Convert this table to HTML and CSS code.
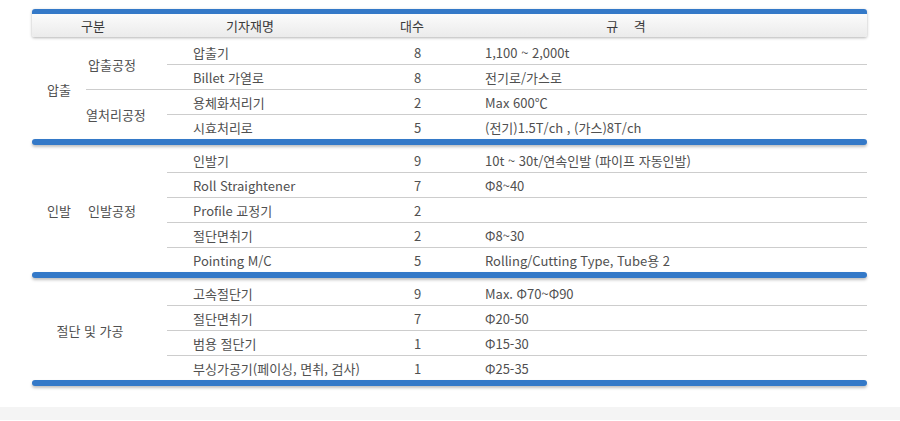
FILE: index.html
```html
<!DOCTYPE html>
<html lang="ko">
<head>
<meta charset="utf-8">
<link rel="stylesheet" href="styles.css">
</head>
<body>
<div class="wrap">
  <div class="head">
    <span class="h1">구분</span>
    <span class="h2">기자재명</span>
    <span class="h3">대수</span>
    <span class="h4">규 격</span>
  </div>

  <table class="grp">
    <colgroup><col class="c1"><col class="c2"><col class="c3"><col class="c4"><col class="c5"></colgroup>
    <tr>
      <td class="g" rowspan="4">압출</td>
      <td class="s" rowspan="2">압출공정</td>
      <td class="it">압출기</td><td class="n">8</td><td class="sp">1,100 ~ 2,000t</td>
    </tr>
    <tr class="ln"><td class="it">Billet 가열로</td><td class="n">8</td><td class="sp">전기로/가스로</td></tr>
    <tr class="ln">
      <td class="s lnc" rowspan="2">열처리공정</td>
      <td class="it">용체화처리기</td><td class="n">2</td><td class="sp">Max 600℃</td>
    </tr>
    <tr class="ln"><td class="it">시효처리로</td><td class="n">5</td><td class="sp">(전기)1.5T/ch , (가스)8T/ch</td></tr>
  </table>
  <div class="bar"></div>

  <table class="grp">
    <colgroup><col class="c1"><col class="c2"><col class="c3"><col class="c4"><col class="c5"></colgroup>
    <tr>
      <td class="g" rowspan="5">인발</td>
      <td class="s" rowspan="5">인발공정</td>
      <td class="it">인발기</td><td class="n">9</td><td class="sp">10t ~ 30t/연속인발 (파이프 자동인발)</td>
    </tr>
    <tr class="ln"><td class="it">Roll Straightener</td><td class="n">7</td><td class="sp">Φ8~40</td></tr>
    <tr class="ln"><td class="it">Profile 교정기</td><td class="n">2</td><td class="sp"></td></tr>
    <tr class="ln"><td class="it">절단면취기</td><td class="n">2</td><td class="sp">Φ8~30</td></tr>
    <tr class="ln"><td class="it">Pointing M/C</td><td class="n">5</td><td class="sp">Rolling/Cutting Type, Tube용 2</td></tr>
  </table>
  <div class="bar"></div>

  <table class="grp">
    <colgroup><col class="c1"><col class="c2"><col class="c3"><col class="c4"><col class="c5"></colgroup>
    <tr>
      <td class="g wide" rowspan="4" colspan="2">절단 및 가공</td>
      <td class="it">고속절단기</td><td class="n">9</td><td class="sp">Max. Φ70~Φ90</td>
    </tr>
    <tr class="ln"><td class="it">절단면취기</td><td class="n">7</td><td class="sp">Φ20-50</td></tr>
    <tr class="ln"><td class="it">범용 절단기</td><td class="n">1</td><td class="sp">Φ15-30</td></tr>
    <tr class="ln"><td class="it">부싱가공기(페이싱, 면취, 검사)</td><td class="n">1</td><td class="sp">Φ25-35</td></tr>
  </table>
  <div class="bar"></div>
</div>
<div class="foot"></div>
</body>
</html>
```

FILE: styles.css
```css
html, body {
  margin: 0;
  padding: 0;
  background: #ffffff;
}

body {
  font-family: "Noto Sans CJK KR", "Noto Sans", sans-serif;
  font-size: 13px;
  color: #505050;
}

.wrap {
  width: 835px;
  padding: 9px 33px 0 32px;
}

.head {
  display: flex;
  align-items: center;
  height: 23px;
  border-top: 5px solid #3479c8;
  border-radius: 3px 3px 2px 2px;
  background: linear-gradient(#fbfbfb, #ebebeb);
  box-shadow: 0 1px 3px rgba(0, 0, 0, 0.3);
  color: #3a3a3a;
}

.head span {
  display: block;
  text-align: center;
}

.h1 { width: 122px; }
.h2 { width: 192px; }
.h3 { width: 132px; }
.h4 { width: 296px; word-spacing: 12px; }

.grp {
  width: 835px;
  margin-top: 2px;
  border-collapse: separate;
  border-spacing: 0;
  table-layout: fixed;
}

.c1 { width: 54px; }
.c2 { width: 81px; }
.c3 { width: 213px; }
.c4 { width: 75px; }
.c5 { width: 412px; }

.grp td {
  height: 24px;
  padding: 0;
  border-top: 1px solid transparent;
  vertical-align: middle;
  white-space: nowrap;
}

.grp tr.ln td.it,
.grp tr.ln td.n,
.grp tr.ln td.sp,
.grp td.lnc {
  border-top-color: #cdcdcd;
}

.g {
  text-align: center;
}

.g.wide {
  padding-right: 19px !important;
}

.s {
  text-align: center;
  padding-right: 29px !important;
}

.it {
  padding-left: 26px !important;
}

.n {
  text-align: center;
}

.sp {
  padding-left: 30px !important;
}

.bar {
  height: 6px;
  border-radius: 3px;
  background: #3479c8;
  box-shadow: 0 2px 3px rgba(0, 0, 0, 0.25);
}

.foot {
  height: 13px;
  margin-top: 21px;
  background: #f4f4f4;
}
```
